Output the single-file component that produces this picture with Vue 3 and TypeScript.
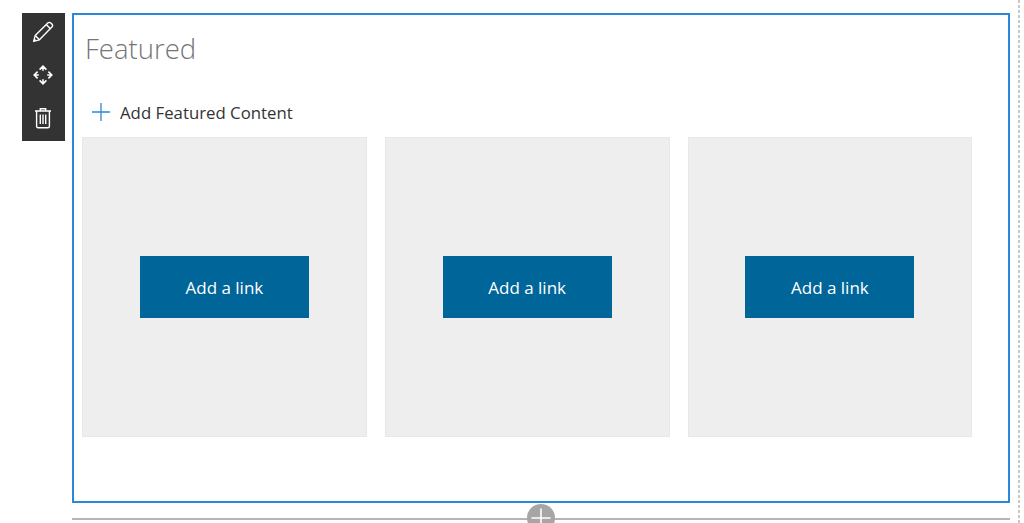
<script setup lang="ts">
const tiles = [1, 2, 3]
</script>

<template>
  <div class="page">
    <div class="toolbar">
      <button class="tool" aria-label="Edit">
        <svg width="22" height="22" viewBox="0 0 22 22" fill="none" stroke="#fff" stroke-width="1.4">
          <path d="M1.6 20.4l1.6-5.8L15.8 2c.9-.9 2.2-.9 3 0l1.1 1.1c.8.8.8 2.1 0 3L7.4 18.8z" stroke-linejoin="round" />
          <path d="M3.2 14.6l4.2 4.2M14.2 3.6l4.2 4.2" />
          <path d="M1.6 20.4l3-.9-2.1-2.1z" fill="#fff" stroke="none" />
        </svg>
      </button>
      <button class="tool" aria-label="Move">
        <svg width="20" height="20" viewBox="0 0 20 20" fill="none" stroke="#fff" stroke-width="1.6">
          <path d="M10 1.4v4.4M6.6 4.6L10 1.2l3.4 3.4" />
          <path d="M10 14.2v4.4M6.6 15.4l3.4 3.4 3.4-3.4" />
          <path d="M1.4 10h4.4M4.6 6.6L1.2 10l3.4 3.4" />
          <path d="M14.2 10h4.4M15.4 6.6l3.4 3.4-3.4 3.4" />
        </svg>
      </button>
      <button class="tool" aria-label="Delete">
        <svg width="18" height="22" viewBox="0 0 18 22" fill="none" stroke="#fff" stroke-width="1.4">
          <path d="M1 4h16M6.3 4V1.7h5.4V4" />
          <path d="M2.6 4v15.2c0 .9.6 1.5 1.5 1.5h9.8c.9 0 1.5-.6 1.5-1.5V4" />
          <path d="M6.3 7.5v9.6M9 7.5v9.6M11.7 7.5v9.6" />
        </svg>
      </button>
    </div>

    <div class="content">
      <section class="webpart">
        <h2 class="title">Featured</h2>
        <div class="add-row">
          <svg class="plus" width="18" height="18" viewBox="0 0 18 18" stroke="#2b88d8" stroke-width="1.3">
            <path d="M9 0v18M0 9h18" />
          </svg>
          <span>Add Featured Content</span>
        </div>
        <div class="tiles">
          <div v-for="t in tiles" :key="t" class="tile">
            <button class="link-btn">Add a link</button>
          </div>
        </div>
      </section>

      <div class="divider">
        <span class="add-section">
          <svg width="28" height="28" viewBox="0 0 28 28" stroke="#fff" stroke-width="1.6">
            <path d="M14 4.5v19M4.5 14h19" />
          </svg>
        </span>
      </div>
    </div>

    <div class="rail"></div>
  </div>
</template>

<style>
html,
body {
  margin: 0;
  background: #fff;
  overflow: hidden;
}
</style>

<style scoped>
.page {
  display: flex;
  align-items: flex-start;
  height: 523px;
  box-sizing: border-box;
  padding: 13px 0 0 22px;
  overflow: hidden;
  font-family: "Open Sans", "Noto Sans", sans-serif;
}

.toolbar {
  width: 43px;
  height: 128px;
  flex: none;
  margin-right: 7px;
  background: #333;
  display: flex;
  flex-direction: column;
  gap: 6px;
}

.tool {
  height: 37px;
  flex: none;
  padding: 0 1px 0 0;
  border: 0;
  background: none;
  display: flex;
  align-items: center;
  justify-content: center;
}

.content {
  width: 938px;
  flex: none;
}

.webpart {
  height: 490px;
  box-sizing: border-box;
  border: 2px solid #2b88d8;
  padding: 0 35px 0 8px;
}

.title {
  margin: 0;
  padding: 15px 0 0 3px;
  height: 66px;
  box-sizing: border-box;
  font-size: 27.5px;
  line-height: 38px;
  font-weight: 300;
  color: #767676;
}

.add-row {
  display: flex;
  align-items: center;
  height: 56px;
  box-sizing: border-box;
  padding: 6px 0 0 10px;
  font-size: 16.8px;
  color: #333;
}

.plus {
  margin-right: 10px;
}

.tiles {
  display: flex;
  gap: 18px;
}

.tile {
  width: 284.75px;
  height: 300px;
  flex: none;
  box-sizing: border-box;
  border: 1px solid #e8e8e8;
  background: #eee;
  display: flex;
  align-items: center;
  justify-content: center;
}

.link-btn {
  width: 169px;
  height: 62px;
  border: 0;
  padding: 0;
  background: #006699;
  color: #fff;
  font-family: inherit;
  font-size: 17px;
}

.divider {
  position: relative;
  margin-top: 15px;
  height: 2px;
  background: #b4b4b4;
}

.add-section {
  position: absolute;
  left: 455px;
  top: -14px;
  width: 28px;
  height: 28px;
  border-radius: 50%;
  background: #a6a6a6;
  display: block;
}

.add-section svg {
  display: block;
}

.rail {
  margin-left: 8px;
  margin-top: -13px;
  width: 2px;
  height: 523px;
  background: repeating-linear-gradient(to bottom, #c8c8c8 0 3px, transparent 3px 5px);
}
</style>
